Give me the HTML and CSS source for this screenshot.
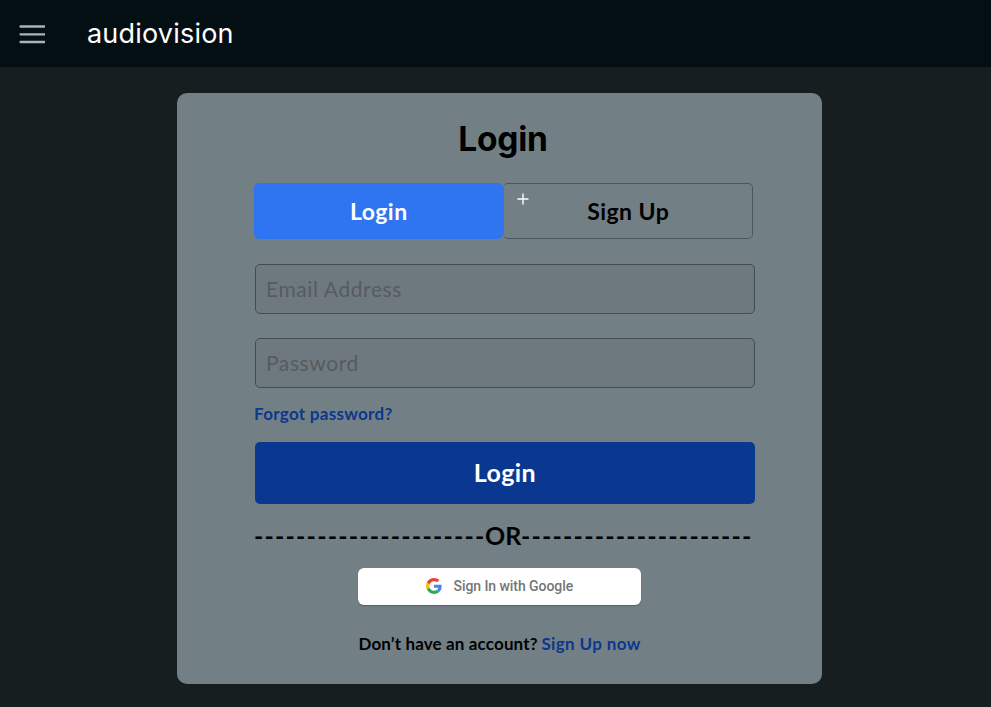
FILE: index.html
```html
<!DOCTYPE html>
<html lang="en">
<head>
<meta charset="utf-8">
<title>audiovision</title>
<link rel="stylesheet" href="styles.css">
</head>
<body>
<header class="topbar">
  <button class="menu" aria-label="Menu"><svg width="26" height="20" viewBox="0 0 26 20"><path d="M1.5 1.5h24M1.5 9.3h24M1.5 17h24" stroke="#a9b4b7" stroke-width="2.3" stroke-linecap="round"/></svg></button>
  <div class="brand">audiovision</div>
</header>
<main class="card">
  <h1 class="title">Login</h1>
  <div class="tabs">
    <button class="tab active"><span>Login</span></button>
    <button class="tab outline"><span>Sign Up</span><svg class="plus" width="12" height="12" viewBox="0 0 12 12"><path d="M6 .5v11M.5 6h11" stroke="#fff" stroke-width="1.4"/></svg></button>
  </div>
  <div class="field email">Email Address</div>
  <div class="field password">Password</div>
  <a class="forgot">Forgot password?</a>
  <button class="submit"><span>Login</span></button>
  <div class="divider"><span class="dashes">----------------------</span><span class="or">OR</span><span class="dashes">----------------------</span></div>
  <button class="google">
    <svg width="16" height="16" viewBox="0 0 48 48"><path fill="#EA4335" d="M24 9.5c3.54 0 6.71 1.22 9.21 3.6l6.85-6.85C35.9 2.38 30.47 0 24 0 14.62 0 6.51 5.38 2.56 13.22l7.98 6.19C12.43 13.72 17.74 9.5 24 9.5z"/><path fill="#4285F4" d="M46.98 24.55c0-1.57-.15-3.09-.38-4.55H24v9.02h12.94c-.58 2.96-2.26 5.48-4.78 7.18l7.73 6c4.51-4.18 7.09-10.36 7.09-17.65z"/><path fill="#FBBC05" d="M10.53 28.59c-.48-1.45-.76-2.99-.76-4.59s.27-3.14.76-4.59l-7.98-6.19C.92 16.46 0 20.12 0 24s.92 7.54 2.56 10.78z"/><path fill="#34A853" d="M24 48c6.48 0 11.93-2.13 15.89-5.81l-7.73-6c-2.15 1.45-4.92 2.3-8.16 2.3-6.26 0-11.57-4.22-13.47-9.91l-7.98 6.19C6.51 42.62 14.62 48 24 48z"/></svg>
    <span>Sign In with Google</span>
  </button>
  <p class="signup"><span class="ask">Don’t have an account?</span><a class="now">Sign Up now</a></p>
</main>
</body>
</html>
```
FILE: styles.css
```css
* { box-sizing: border-box; }
body {
  margin: 0;
  height: 707px;
  overflow: hidden;
  background: #171e20;
  font-family: Lato, sans-serif;
  color: #000;
}
button { font: inherit; border: 0; padding: 0; margin: 0; background: none; color: inherit; }
svg { display: block; flex: none; }
.topbar {
  height: 67px;
  background: #040f14;
  display: flex;
  align-items: center;
  padding: 0 0 0 19px;
}
.menu { margin-top: 2px; }
.brand {
  margin: 0 0 0 42px;
  font: 400 27px/34px Inter, sans-serif;
  letter-spacing: .2px;
  color: #fff;
}
.card {
  width: 645px;
  height: 591px;
  margin: 26px 0 0 177.4px;
  padding: 24px 68px 0 76.6px;
  background: #728086;
  border-radius: 10px;
  display: flex;
  flex-direction: column;
}
.title {
  margin: 0 0 0 4px;
  width: 490px;
  text-align: center;
  font: 700 33.5px/44px Inter, sans-serif;
  letter-spacing: -.2px;
}
.tabs { display: flex; margin-top: 22px; width: 499px; height: 56px; }
.tab {
  width: 249.5px;
  position: relative;
  border-radius: 5px;
  font-size: 23px;
  font-weight: 700;
  letter-spacing: .45px;
}
.active { background: #2f74f0; color: #fff; }
.outline { border: 1px solid #4b575d; border-left-color: #65737b; }
.plus { position: absolute; left: 12.5px; top: 9px; }
.field {
  width: 500px;
  height: 50px;
  margin-left: 1px;
  padding-left: 10px;
  border: 1px solid #414d54;
  border-radius: 5px;
  background: #6e797f;
  color: #575b5d;
  font-size: 21px;
  line-height: 48px;
  letter-spacing: .6px;
}
.email { margin-top: 25px; }
.password { margin-top: 24px; }
.forgot {
  margin-top: 14px;
  font-size: 17px;
  line-height: 24px;
  font-weight: 700;
  letter-spacing: .3px;
  color: #0b378f;
}
.submit {
  width: 500px;
  height: 62px;
  margin: 16px 0 0 1px;
  padding-bottom: 2px;
  border-radius: 5px;
  background: #0a378f;
  color: #fff;
  font-size: 25px;
  font-weight: 700;
  letter-spacing: .4px;
}
.divider {
  display: flex;
  height: 32px;
  margin-top: 15px;
  line-height: 32px;
  font-size: 25px;
  font-weight: 700;
  white-space: nowrap;
}
.dashes { width: 231px; letter-spacing: 1.2px; }
.or { width: 36px; }
.google {
  width: 283px;
  height: 37px;
  margin: 16.5px 0 0 104.5px;
  padding: 0 0 1px 68px;
  border-radius: 6px;
  background: #fff;
  box-shadow: 0 1px 1px rgba(0, 0, 0, .25);
  display: flex;
  align-items: center;
  gap: 11px;
  font: 500 14px/20px Roboto, sans-serif;
  letter-spacing: -.06px;
  color: #757575;
}
.signup {
  display: flex;
  margin: 27.5px 0 0 104.5px;
  font-size: 17px;
  line-height: 24px;
  font-weight: 700;
  letter-spacing: .14px;
  white-space: nowrap;
}
.ask { width: 183px; }
.now { color: #0b378f; letter-spacing: .35px; }
```
